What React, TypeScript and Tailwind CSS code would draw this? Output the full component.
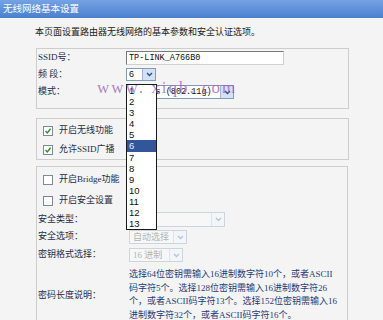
const Arrow = ({ disabled }: { disabled?: boolean }) => (
  <span
    className={`flex w-[13px] items-center justify-center border-l ${
      disabled ? "border-[#dfe4ec] bg-[#f2f5f9]" : "border-[#9fb7dc] bg-[#d3e1f6]"
    }`}
  >
    <svg width="7" height="5" viewBox="0 0 7 5">
      <path
        d="M1 1l2.5 2.5L6 1"
        fill="none"
        stroke={disabled ? "#b9c5d8" : "#2a4f8e"}
        strokeWidth="1.4"
      />
    </svg>
  </span>
);

const Check = ({ checked }: { checked?: boolean }) => (
  <span className="flex h-[10px] w-[10px] items-center justify-center border border-[#7d8a98] bg-white">
    {checked && (
      <svg width="8" height="8" viewBox="0 0 8 8">
        <path d="M1.5 4l1.8 2L6.6 1.8" fill="none" stroke="#2f8f2f" strokeWidth="1.4" />
      </svg>
    )}
  </span>
);

const channels = ["1", "2", "3", "4", "5", "6", "7", "8", "9", "10", "11", "12", "13"];

const descLines = [
  "选择64位密钥需输入16进制数字符10个，或者ASCII",
  "码字符5个。选择128位密钥需输入16进制数字符26",
  "个，或者ASCII码字符13个。选择152位密钥需输入16",
  "进制数字符32个，或者ASCII码字符16个。",
];

const App = () => {
  return (
    <div className="relative h-[320px] w-[383px] overflow-hidden bg-[#f4f4f4] font-['Liberation_Serif','Noto_Sans_CJK_SC',serif] text-[9px] text-[#1f2c48]">

      {/* Title bar */}
      <div className="h-[18px] bg-gradient-to-b from-[#74a3e3] to-[#4b80ce] pl-[3px] text-[9.5px] leading-[18px] text-white">
        无线网络基本设置
      </div>

      {/* Intro */}
      <p className="mt-[7px] pl-[35px] leading-[14px] text-[#222]">
        本页面设置路由器无线网络的基本参数和安全认证选项。
      </p>

      {/* Basic */}
      <div className="ml-[36px] mt-[9px] flex h-[61px] w-[313px] flex-col border border-[#cdcdcd] pt-[1px]">
        <div className="flex h-[16px] items-center">
          <span className="w-[89px] pl-[1px]">SSID号：</span>
          <div className="flex h-[14px] w-[158px] items-center border border-[#7a7a7a] border-r-[#d0d0d0] border-b-[#d0d0d0] bg-white pl-[2px] font-['Liberation_Mono',monospace] text-[8.5px] text-[#111]">
            TP-LINK_A766B0
          </div>
        </div>
        <div className="flex h-[17px] items-center">
          <span className="w-[89px] pl-[1px]">频&nbsp;段：</span>
          <div className="flex h-[13px] w-[30px] border border-[#7f9db9] bg-white text-[#111]">
            <span className="flex-1 pl-[2px] font-['Liberation_Sans',sans-serif] text-[9px] leading-[11px]">6</span>
            <Arrow />
          </div>
        </div>
        <div className="flex h-[18px] items-center">
          <span className="w-[89px] pl-[1px]">模式：</span>
          <div className="flex h-[14px] w-[108px] border border-[#7f9db9] bg-white text-[#111]">
            <span className="flex-1 pl-[3px] font-['Liberation_Mono',monospace] text-[8.5px] leading-[12px]">11Mbps (802.11g)</span>
            <Arrow />
          </div>
        </div>
      </div>

      {/* Switches */}
      <div className="ml-[36px] mt-[9px] flex h-[42px] w-[313px] flex-col border border-[#cdcdcd] pt-[2px]">
        <div className="flex h-[19px] items-center pl-[6px]">
          <Check checked />
          <span className="ml-[6px]">开启无线功能</span>
        </div>
        <div className="flex h-[19px] items-center pl-[6px]">
          <Check checked />
          <span className="ml-[6px]">允许SSID广播</span>
        </div>
      </div>

      {/* Security */}
      <div className="ml-[36px] mt-[6px] flex h-[170px] w-[312px] flex-col border border-[#cdcdcd] pt-[3px]">
        <div className="flex h-[20px] items-center pl-[6px]">
          <Check />
          <span className="ml-[6px]">开启Bridge功能</span>
        </div>
        <div className="flex h-[21px] items-center pl-[6px]">
          <Check />
          <span className="ml-[6px]">开启安全设置</span>
        </div>
        <div className="flex h-[17px] items-center">
          <span className="w-[92px] pl-[1px]">安全类型：</span>
          <div className="flex h-[15px] w-[96px] border border-[#cfd3da] bg-[#f7f7f7]">
            <span className="flex-1" />
            <Arrow disabled />
          </div>
        </div>
        <div className="flex h-[18px] items-center">
          <span className="w-[92px] pl-[1px]">安全选项：</span>
          <div className="flex h-[14px] w-[58px] border border-[#cfd3da] bg-[#f7f7f7] text-[#b3b3b3]">
            <span className="flex-1 pl-[3px] leading-[12px]">自动选择</span>
            <Arrow disabled />
          </div>
        </div>
        <div className="flex h-[18px] items-center">
          <span className="w-[92px] pl-[1px]">密钥格式选择：</span>
          <div className="flex h-[14px] w-[54px] border border-[#cfd3da] bg-[#f7f7f7] text-[#b3b3b3]">
            <span className="flex-1 pl-[3px] leading-[12px]">16 进制</span>
            <Arrow disabled />
          </div>
        </div>
        <div className="mt-[4px] flex items-center">
          <span className="w-[92px] pl-[1px]">密码长度说明：</span>
          <div className="flex flex-col text-[#1d3c78]">
            {descLines.map((line, i) => (
              <p key={i} className="h-[13.7px] whitespace-nowrap leading-[13.7px]">
                {line}
              </p>
            ))}
          </div>
        </div>
      </div>

      {/* Open channel list */}
      <div className="absolute left-[126px] top-[84px] flex w-[31px] flex-col border border-[#1a1a1a] bg-white font-['Liberation_Sans',sans-serif] text-[9.5px] text-[#111]">
        {channels.map((c) => (
          <span
            key={c}
            className={`h-[11.1px] pl-[2px] leading-[11px] ${c === "6" ? "bg-[#31579a] text-[#e8eefa]" : ""}`}
          >
            {c}
          </span>
        ))}
      </div>

      {/* Watermark */}
      <div className="pointer-events-none absolute left-[97px] top-[78px] whitespace-nowrap font-['Liberation_Serif',serif] text-[17px] leading-[20px] tracking-[2px] text-[#9a5cb4]/75">
        www. xiqb. com
      </div>
    </div>
  );
};

export default App;
